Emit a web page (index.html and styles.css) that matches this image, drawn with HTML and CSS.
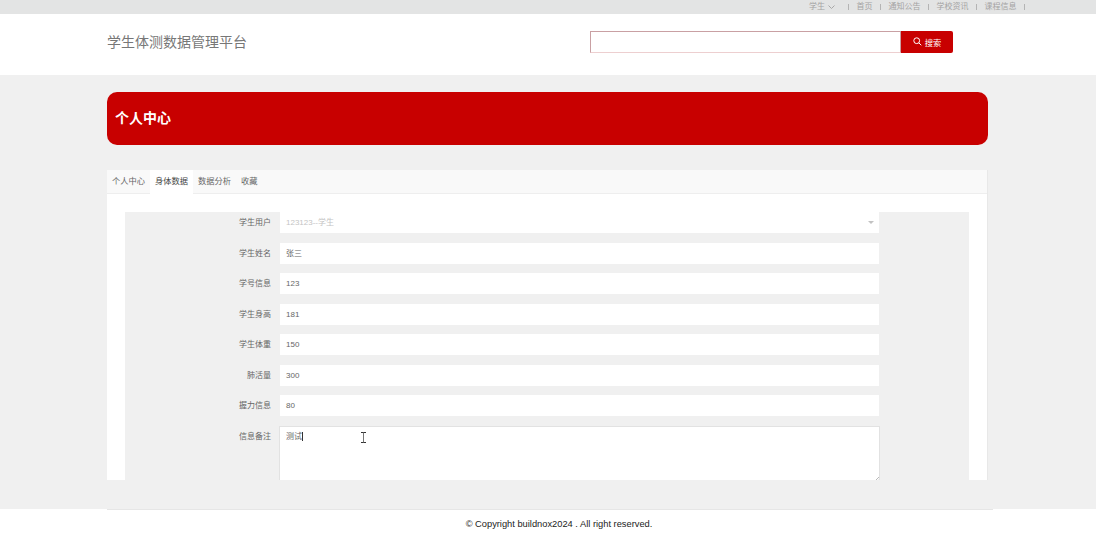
FILE: index.html
```html
<!DOCTYPE html>
<html lang="zh">
<head>
<meta charset="utf-8">
<title>学生体测数据管理平台</title>
<link rel="stylesheet" href="styles.css">
</head>
<body>
<div class="topbar">
  <nav class="topnav">
    <span class="user">学生 <svg class="chev" width="7" height="4" viewBox="0 0 7 4"><path d="M.5.5 3.5 3.5 6.500.5" fill="none" stroke="#a8a8a8"/></svg></span>
    <i class="sep"></i><span>首页</span>
    <i class="sep"></i><span>通知公告</span>
    <i class="sep"></i><span>学校资讯</span>
    <i class="sep"></i><span>课程信息</span>
    <i class="sep"></i>
  </nav>
</div>
<header class="header">
  <div class="brand">学生体测数据管理平台</div>
  <form class="search">
    <div class="search-input"></div>
    <div class="search-btn">
      <svg width="9" height="9" viewBox="0 0 9 9"><circle cx="3.700" cy="3.700" r="2.900" fill="none" stroke="#fff"/><path d="M5.800 5.800 8.300 8.300" stroke="#fff"/></svg>
      <span>搜索</span>
    </div>
  </form>
</header>
<main class="main">
  <div class="banner">个人中心</div>
  <section class="card">
    <div class="tabs">
      <span class="tab">个人中心</span>
      <span class="tab active">身体数据</span>
      <span class="tab">数据分析</span>
      <span class="tab">收藏</span>
    </div>
    <div class="card-body">
      <div class="form">
        <div class="row"><label class="lbl">学生用户</label><div class="field select"><span class="muted">123123--学生</span><i class="caret-down"></i></div></div>
        <div class="row"><label class="lbl">学生姓名</label><div class="field">张三</div></div>
        <div class="row"><label class="lbl">学号信息</label><div class="field">123</div></div>
        <div class="row"><label class="lbl">学生身高</label><div class="field">181</div></div>
        <div class="row"><label class="lbl">学生体重</label><div class="field">150</div></div>
        <div class="row"><label class="lbl">肺活量</label><div class="field">300</div></div>
        <div class="row"><label class="lbl">握力信息</label><div class="field">80</div></div>
        <div class="row"><label class="lbl">信息备注</label>
          <div class="field area"><span class="typed">测试</span>
            <svg class="ibeam" width="5" height="11" viewBox="0 0 5 11"><path d="M0 .5h5M0 10.500h5" stroke="#333"/><path d="M2.500 .5v10" stroke="#777"/></svg>
            <svg class="grip" width="4" height="4" viewBox="0 0 4 4"><path d="M0 4 4 0M2.500 4 4 2.500" stroke="#999" stroke-width=".7"/></svg>
          </div>
        </div>
      </div>
    </div>
  </section>
</main>
<footer class="footer"><div class="copy">© Copyright buildnox2024 . All right reserved.</div></footer>
</body>
</html>
```
FILE: styles.css
```css
* { box-sizing: border-box; }
html, body { margin: 0; padding: 0; }
body {
  width: 1096px;
  height: 534px;
  overflow: hidden;
  background: #fff;
  font-family: "Liberation Sans", "Noto Sans CJK SC", sans-serif;
  font-size: 8px;
  color: #555;
}
.topbar {
  height: 14px;
  background: #e3e4e4;
  display: flex;
  justify-content: flex-end;
  padding-right: 71px;
}
.topnav {
  display: flex;
  align-items: center;
  color: #a3a3a3;
  line-height: 10px;
}
.user { display: flex; align-items: center; gap: 3px; }
.sep { width: 1px; height: 6px; background: #b4b4b4; margin: 0 7.500px; }
.user + .sep { margin-left: 13px; }
.topnav .sep:last-child { margin-right: 0; }
.header {
  height: 61px;
  padding: 0 143px 6px 107px;
  display: flex;
  align-items: center;
  justify-content: space-between;
}
.brand { font-size: 14px; color: #777; margin-bottom: 2px; }
.search { display: flex; width: 363px; height: 22px; }
.search-input {
  flex: 1;
  border: 1px solid #c9a0a3;
  border-bottom-color: #edcfd0;
}
.search-btn {
  width: 52px;
  background: #c80000;
  border-radius: 0 2px 2px 0;
  color: #fff;
  font-size: 8.250px;
  display: flex;
  align-items: center;
  justify-content: center;
  gap: 3px;
}
.main {
  height: 434px;
  background: #f0f0f0;
  padding: 17px 108px 0 107px;
}
.banner {
  height: 53px;
  background: #c80000;
  border-radius: 10px;
  color: #fff;
  font-size: 14px;
  font-weight: bold;
  display: flex;
  align-items: center;
  padding: 0 0 3px 8px;
}
.card {
  margin: 25px 1px 0 0;
  height: 310px;
  overflow: hidden;
  background: #fff;
  box-shadow: 1px 0 0 #e8e8e8;
}
.tabs {
  height: 24px;
  display: flex;
  background: #f9f9f9;
  border-bottom: 1px solid #eeeeee;
  font-size: 8.250px;
}
.tab {
  padding: 0 5px;
  line-height: 23px;
  color: #666;
}
.tab.active { background: #fff; height: 24px; color: #444; }
.card-body { padding: 18px 18px 0; }
.form { background: #f0f0f0; padding-bottom: 30px; }
.row { display: flex; margin-bottom: 9.500px; }
.lbl {
  width: 146px;
  height: 21px;
  text-align: right;
  line-height: 22px;
  color: #666;
}
.field {
  width: 599px;
  margin-left: 9px;
  height: 21px;
  background: #fff;
  line-height: 22px;
  padding-left: 6px;
  position: relative;
  color: #666;
}
.muted { color: #c4c4c4; }
.caret-down {
  position: absolute;
  right: 5px;
  top: 9px;
  border: 3px solid transparent;
  border-top: 3px solid #c2c2c2;
  border-bottom: 0;
}
.area {
  width: 601px;
  margin-left: 8px;
  height: 70px;
  line-height: 20px;
  border-top: 1px solid #e2e2e2;
  border-left: 1px solid #e2e2e2;
  border-right: 1px solid #e2e2e2;
}
.typed { border-right: 1px solid #333; }
.ibeam { position: absolute; left: 81px; top: 5px; }
.grip { position: absolute; right: 0; top: 50px; }
.footer { height: 25px; padding: 0 103px 0 107px; }
.copy {
  border-top: 1px solid #e6e6e6;
  text-align: center;
  font-size: 9.300px;
  line-height: 28px;
  color: #222;
  padding-left: 18px;
}
```
